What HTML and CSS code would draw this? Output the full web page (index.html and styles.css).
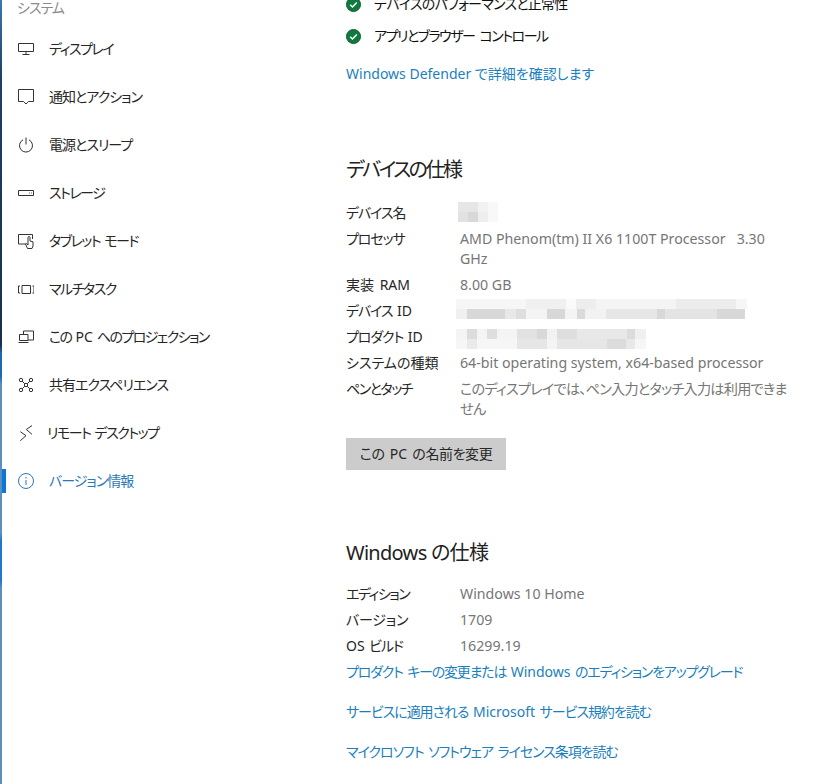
FILE: index.html
```html
<!DOCTYPE html>
<html lang="ja">
<head>
<meta charset="utf-8">
<title>バージョン情報</title>
<link rel="stylesheet" href="styles.css">
</head>
<body>
<div class="page">
  <div class="edge"></div>
  <nav class="sidebar">
    <div class="sys">システム</div>
    <div class="item kana"><svg class="ic" viewBox="0 0 16 16"><path d="M.5 2.500h15v8H.5zM8 10.500v3M4.500 13.500h7"/></svg><span>ディスプレイ</span></div>
    <div class="item"><svg class="ic" viewBox="0 0 16 16"><path d="M.5 .5h15v12h-5l-2.500 2.500-2.500-2.500h-5z"/></svg><span>通知とアクション</span></div>
    <div class="item"><svg class="ic" viewBox="0 0 16 16"><path d="M5 2.800a6.500 6.500 0 1 0 6 0M8 .5v7"/></svg><span>電源とスリープ</span></div>
    <div class="item kana"><svg class="ic" viewBox="0 0 16 16"><path d="M.5 5.500h15v5H.5zM11 8h.8M13 8h.8"/></svg><span>ストレージ</span></div>
    <div class="item kana"><svg class="ic" viewBox="0 0 16 16"><path d="M8 11H.5V1.500h14V6M9.500 15.500L7.500 11l1-.5 1.500 1.500V4.500a1 1 0 0 1 2 0V8l3 .8V13l-1 2.500z"/></svg><span>タブレット モード</span></div>
    <div class="item kana"><svg class="ic" viewBox="0 0 16 16"><path d="M4 4.500h8.500v8H4zM2 5H.5v7H2M14.500 5H16v7h-1.500"/></svg><span>マルチタスク</span></div>
    <div class="item pj"><svg class="ic" viewBox="0 0 16 16"><path d="M5.500 5V2h10v9h-5.500M1.500 5.500H10v6H1.500zM.5 13.500h10"/></svg><span>この <span class="lat">PC</span> へのプロジェクション</span></div>
    <div class="item"><svg class="ic" viewBox="0 0 16 16"><circle cx="3" cy="3" r="1.700"/><circle cx="13" cy="3" r="1.700"/><circle cx="3" cy="13" r="1.700"/><circle cx="13" cy="13" r="1.700"/><path d="M6.500 6.500h3v3h-3zM4.200 4.200l2.300 2.300M11.800 4.200L9.500 6.500M4.200 11.800l2.300-2.300M11.800 11.800L9.500 9.500"/></svg><span>共有エクスペリエンス</span></div>
    <div class="item rd kana"><svg class="ic" viewBox="0 0 16 16"><path d="M2.300 6.700l5.700 4-5.700 5M14 .5L8.300 4.500 14 9.300"/></svg><span>リモート デスクトップ</span></div>
    <div class="item on"><svg class="ic" viewBox="0 0 16 16"><circle cx="8" cy="8" r="7.500"/><path d="M8 7v5M8 4v1.500"/></svg><span>バージョン情報</span></div>
  </nav>
  <main class="content">
    <div class="status first"><svg class="chk" viewBox="0 0 16 16"><circle cx="8" cy="8" r="7.500"/><path d="M4.500 8.300l2.400 2.300 4.600-4.700"/></svg><span>デバイスのパフォーマンスと正常性</span></div>
    <div class="status second"><svg class="chk" viewBox="0 0 16 16"><circle cx="8" cy="8" r="7.500"/><path d="M4.500 8.300l2.400 2.300 4.600-4.700"/></svg><span>アプリとブラウザー コントロール</span></div>
    <a class="link defender">Windows Defender で詳細を確認します</a>

    <h2 class="h-dev">デバイスの仕様</h2>
    <dl class="spec">
      <dt>デバイス名</dt><dd><i class="blur b1"></i></dd>
      <dt>プロセッサ</dt><dd>AMD Phenom(tm) II X6 1100T Processor&nbsp;&nbsp; 3.30 GHz</dd>
      <dt class="wide">実装 <span class="lat">RAM</span></dt><dd>8.00 GB</dd>
      <dt>デバイス <span class="lat">ID</span></dt><dd><i class="blur b2"></i></dd>
      <dt>プロダクト <span class="lat">ID</span></dt><dd><i class="blur b3"></i></dd>
      <dt class="wide">システムの種類</dt><dd>64-bit operating system, x64-based processor</dd>
      <dt class="narrow">ペンとタッチ</dt><dd class="tight">このディスプレイでは、ペン入力とタッチ入力は利用できません</dd>
    </dl>
    <div class="btn">この <span class="lat">PC</span> の名前を変更</div>

    <h2 class="h-win">Windows の仕様</h2>
    <dl class="spec">
      <dt class="narrow">エディション</dt><dd>Windows 10 Home</dd>
      <dt class="even">バージョン</dt><dd>1709</dd>
      <dt><span class="lat">OS</span> ビルド</dt><dd>16299.19</dd>
    </dl>
    <a class="link ja l1">プロダクト キーの変更または <span class="lat">Windows</span> のエディションをアップグレード</a>
    <a class="link ja l2">サービスに適用される <span class="lat">Microsoft</span> サービス規約を読む</a>
    <a class="link ja l2">マイクロソフト ソフトウェア ライセンス条項を読む</a>
  </main>
</div>
</body>
</html>
```
FILE: styles.css
```css
* { box-sizing: border-box; }
html, body { margin: 0; padding: 0; background: #fff; }
body {
  width: 813px; height: 784px; overflow: hidden;
  font-family: "Noto Sans", "Noto Sans CJK JP", sans-serif;
  font-size: 14px; color: #262626;
  font-feature-settings: "palt";
}
.lat { letter-spacing: 0; }
.page { display: flex; height: 784px; position: relative; }
.edge { position: absolute; left: 0; top: 0; bottom: 0; width: 2px; background: linear-gradient(180deg, #3b78b0 0, #1f3f66 10%, #16304f 44%, #1c68b5 45%, #1c68b5 48%, #5b8fc0 49%, #5b8fc0 68%, #1f78d0 69%, #1f78d0 74%, #5b8fc0 75%); }
.sidebar { width: 346px; flex: none; }
.sys { height: 28px; padding-left: 17px; margin-top: -3px; line-height: 22px; color: #8a8a8a; letter-spacing: -1px; }
.item { height: 48px; display: flex; align-items: center; padding-left: 18px; gap: 15px; position: relative; white-space: nowrap; letter-spacing: -1px; word-spacing: 2px; }
.item > span { padding-bottom: 2px; }
.item.kana { letter-spacing: -1.5px; }
.item.pj { letter-spacing: -1.6px; }
.ic { width: 16px; height: 16px; flex: none; fill: none; stroke: #333; stroke-width: 1; }
.rd { gap: 13px; }
.on { color: #2a7ab5; }
.on .ic { stroke: #2a7ab5; }
.on::before { content: ""; position: absolute; left: 2px; top: 12px; width: 4px; height: 24px; background: #0a78d4; }
.content { width: 450px; flex: none; }
.status { display: flex; align-items: center; gap: 13px; height: 24px; line-height: 24px; color: #111; margin-bottom: 8px; white-space: nowrap; }
.first { margin-top: -8px; letter-spacing: -.75px; }
.second { letter-spacing: -1.5px; word-spacing: 3px; }
.chk { width: 15px; height: 15px; flex: none; }
.chk circle { fill: #107a3e; stroke: #0d5c30; stroke-width: 1; }
.chk path { fill: none; stroke: #fff; stroke-width: 1.600; }
.link { display: block; color: #1b7fbd; line-height: 20px; white-space: nowrap; }
.ja { letter-spacing: -1.05px; word-spacing: 2px; }
.defender { margin-top: 16px; }
h2 { margin: 0; font-weight: 400; font-size: 20px; line-height: 28px; color: #222; }
.h-dev { margin-top: 72px; letter-spacing: -2.5px; }
.h-win { margin-top: 69px; letter-spacing: -.7px; }
.spec { display: grid; grid-template-columns: 114px 1fr; margin: 0; line-height: 20px; }
.spec dt { padding: 3px 0; white-space: nowrap; letter-spacing: -1.1px; word-spacing: 2px; }
.spec dt.wide { letter-spacing: 0; }
.spec dt.even { letter-spacing: -.2px; }
.spec dt.narrow { letter-spacing: -1.5px; }
.spec dd { margin: 0; padding: 3px 0; color: #767676; width: 330px; font-size: 14.2px; }
.spec dd.tight { letter-spacing: -.8px; }
.h-dev + .spec { margin-top: 16px; }
.h-win + .spec { margin-top: 14px; }
.blur { display: block; background-repeat: no-repeat; background-size: 100% 50%; background-position: top, bottom; }
.b1 { width: 40px; height: 20px; margin: -1px 0 1px -2px;
  background-image:
    linear-gradient(90deg, #e6e6e6 0 20px, #f2f2f2 20px 30px, #f8f8f8 30px),
    linear-gradient(90deg, #e2e2e2 0 10px, #d8d8d8 10px 20px, #eeeeee 20px 30px, #f8f8f8 30px); }
.b2 { width: 291px; height: 20px; margin: -2px 0 2px -4px;
  background-image:
    linear-gradient(90deg, #f6f6f6 0 70px, #f0f0f0 70px 110px, #fafafa 110px 120px, #ededed 120px 140px, #f4f4f4 140px 220px, #ececec 220px 280px, #f6f6f6 280px),
    linear-gradient(90deg, #f0f0f0 0 11px, #d8d8d8 11px 49px, #e8e8e8 49px 60px, #dedede 60px 70px, #f4f4f4 70px 91px, #d8d8d8 91px 109px, #f4f4f4 109px 121px, #dadada 121px 129px, #f2f2f2 129px 150px, #e6e6e6 150px 201px, #d8d8d8 201px 209px, #e4e4e4 209px 261px, #d8d8d8 261px 289px, #fff 289px); }
.b3 { width: 190px; height: 20px; margin: 2px 0 -2px -4px;
  background-image:
    linear-gradient(90deg, #f4f4f4 0 11px, #dcdcdc 11px 21px, #f4f4f4 21px 31px, #dedede 31px 41px, #f4f4f4 41px 61px, #e2e2e2 61px 81px, #d8d8d8 81px 91px, #f2f2f2 91px 101px, #dedede 101px 121px, #e8e8e8 121px 171px, #dcdcdc 171px 179px, #f0f0f0 179px),
    linear-gradient(90deg, #f6f6f6 0 11px, #eaeaea 11px 21px, #f6f6f6 21px 61px, #e6e6e6 61px 91px, #f4f4f4 91px 101px, #e6e6e6 101px 151px, #dcdcdc 151px 170px, #e8e8e8 170px 179px, #f6f6f6 179px); }
.btn { width: 160px; height: 32px; margin-top: 16px; background: #cccccc; text-align: center; line-height: 32px; letter-spacing: -.4px; word-spacing: 2px; }
.l1 { margin-top: 3px; letter-spacing: -1.2px; }
.l2 { margin-top: 20px; }
```
